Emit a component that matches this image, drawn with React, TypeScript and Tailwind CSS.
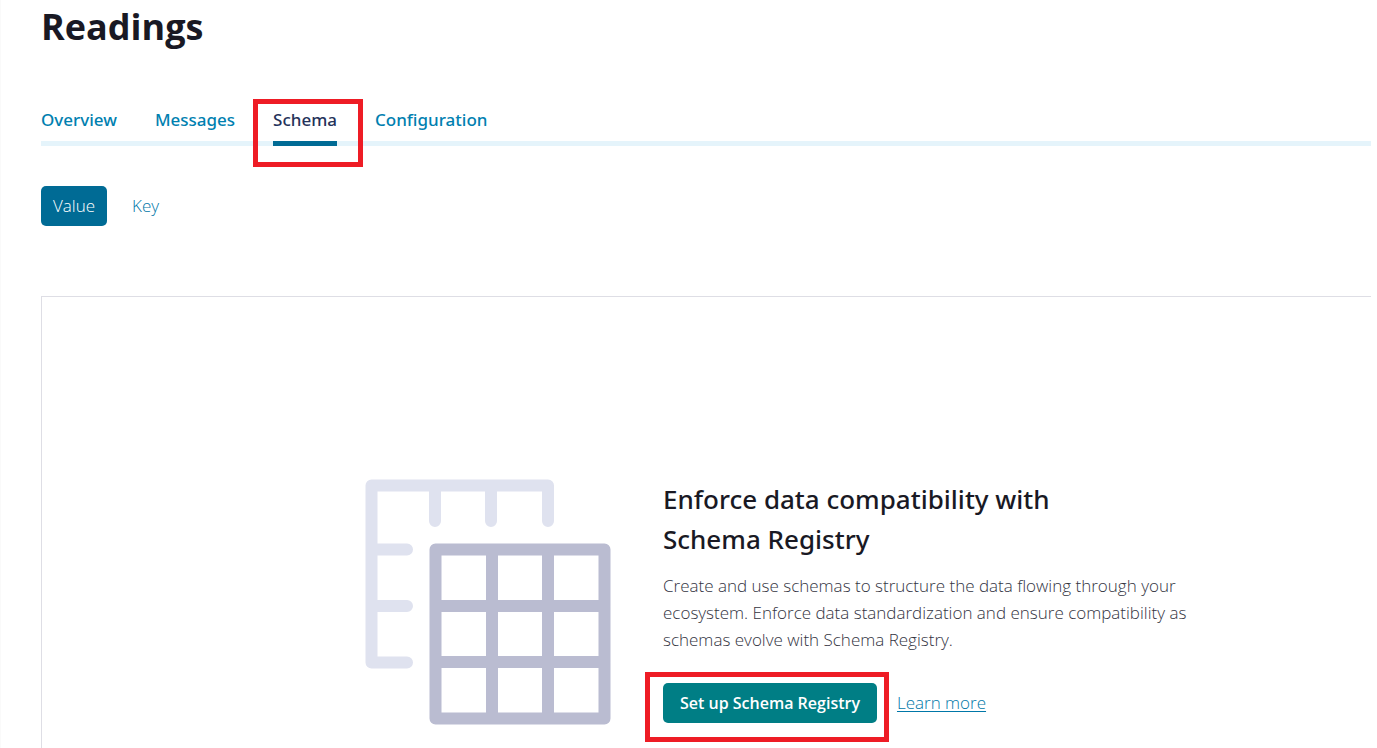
import React from "react";

const tabs = ["Overview", "Messages", "Schema", "Configuration"];

function Highlight({ className }: { className: string }) {
  return (
    <span
      aria-hidden="true"
      className={`pointer-events-none absolute border-[5px] border-[#ee1c25] ${className}`}
    />
  );
}

function TablesIllustration() {
  return (
    <svg
      width="246"
      height="246"
      viewBox="0 0 246 246"
      fill="none"
      strokeWidth="12"
      strokeLinejoin="round"
      strokeLinecap="round"
      className="shrink-0"
      aria-hidden="true"
    >
      <path
        stroke="#dfe2ef"
        d="M42 183.500H6.500V6.500H183V42M70 6.500V42M126 6.500V42M6.500 70.500H42M6.500 127H42"
      />
      <path
        stroke="#babcd1"
        d="M70.500 70.500H239.500V239.500H70.500ZM127 70.500V239.500M183 70.500V239.500M70.500 127H239.500M70.500 183H239.500"
      />
    </svg>
  );
}

export default function App() {
  return (
    <div className="flex min-h-screen flex-col border-l border-[#fafafa] bg-white pr-1.5 pl-10 font-['Open_Sans',sans-serif] text-[#191924]">
      <h1 className="text-[36px] leading-[54px] font-bold">Readings</h1>

      <nav
        aria-label="Topic"
        className="mt-[52px] flex gap-[38px] border-b-[5px] border-[#e5f4fb] font-['Noto_Sans',sans-serif] text-[17px] leading-7 font-medium"
      >
        {tabs.map((tab) =>
          tab === "Schema" ? (
            <a
              key={tab}
              href="#schema"
              aria-current="page"
              className="relative -mb-[5px] border-b-[5px] border-[#006b95] pb-[7px] text-[#24325a]"
            >
              {tab}
              <Highlight className="-top-[7px] -right-[26px] -bottom-[26px] -left-5" />
            </a>
          ) : (
            <a key={tab} href={`#${tab.toLowerCase()}`} className="pb-[7px] text-[#0080b0]">
              {tab}
            </a>
          ),
        )}
      </nav>

      <div className="mt-10 flex gap-[13px] text-[17px] font-light">
        <button type="button" aria-pressed="true" className="h-10 rounded-[5px] bg-[#006b95] px-3 text-white">
          Value
        </button>
        <button type="button" aria-pressed="false" className="h-10 px-3 text-[#0077a8]">
          Key
        </button>
      </div>

      <main className="mt-[70px] flex grow items-start justify-center gap-[52px] border-t border-l border-[#dedee5] pt-[182px] pl-[145px]">
        <TablesIllustration />
        <section className="w-[530px]">
          <h2 className="w-[410px] font-['Noto_Sans',sans-serif] text-[26px] leading-10 font-medium">
            Enforce data compatibility with Schema Registry
          </h2>
          <p className="mt-[13px] text-[17px] leading-[27px] font-light text-[#33343f]">
            Create and use schemas to structure the data flowing through your ecosystem. Enforce data
            standardization and ensure compatibility as schemas evolve with Schema Registry.
          </p>
          <div className="mt-[30px] flex items-center gap-5">
            <div className="relative">
              <button type="button" className="h-10 rounded-[5px] bg-[#007e85] px-[17px] text-[16px] font-semibold text-white">
                Set up Schema Registry
              </button>
              <Highlight className="-top-[11px] -right-3 -bottom-[19px] -left-[18px]" />
            </div>
            <a href="#learn-more" className="text-[17px] font-light text-[#0077a8] underline underline-offset-2">
              Learn more
            </a>
          </div>
        </section>
      </main>
    </div>
  );
}
